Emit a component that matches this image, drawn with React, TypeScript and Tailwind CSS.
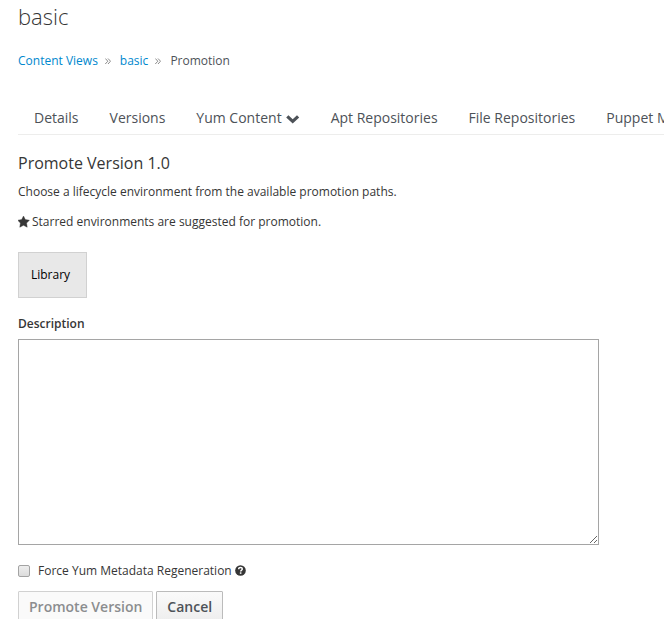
import { useState } from 'react';

const tabs = [
  { label: 'Details' },
  { label: 'Versions' },
  { label: 'Yum Content', menu: true },
  { label: 'Apt Repositories' },
  { label: 'File Repositories' },
  { label: 'Puppet Modules' },
];

function ChevronDown() {
  return (
    <svg viewBox="0 0 14 10" className="mt-px h-[10px] w-[14px]" aria-hidden="true">
      <path d="M0.2 3.4 L2.4 1.2 L6.7 5.2 L11 1.2 L13.2 3.4 L6.7 9.6 Z" fill="currentColor" />
    </svg>
  );
}

function Star() {
  return (
    <svg viewBox="0 0 12 12" className="h-3 w-3" aria-hidden="true">
      <path
        d="M5.5 0 L7.3 3.6 L11.4 4.2 L8.6 7.1 L9.2 11.2 L5.5 9.3 L1.8 11.2 L2.4 7.1 L-0.4 4.2 L3.7 3.6 Z"
        fill="currentColor"
        stroke="currentColor"
        strokeWidth="0.4"
      />
    </svg>
  );
}

function Help() {
  return (
    <svg viewBox="0 0 12 12" className="mb-px h-[11px] w-[11px]" aria-hidden="true">
      <circle cx="6" cy="6" r="5.8" fill="currentColor" />
      <path
        d="M4 4.6 C4 3.3 4.9 2.8 6 2.8 C7.2 2.8 8 3.5 8 4.4 C8 5.6 6.2 5.6 6.2 7.1"
        fill="none"
        stroke="white"
        strokeWidth="1.6"
      />
      <rect x="5.3" y="8" width="1.7" height="1.6" fill="white" />
    </svg>
  );
}

function Separator() {
  return (
    <svg viewBox="0 0 6 8" className="mr-[9px] ml-[7px] h-2 w-1.5 text-[#8b8b8b]" aria-hidden="true">
      <path d="M0.3 1.5 L2.8 4.2 L0.3 7 M3 1.5 L5.5 4.2 L3 7" fill="none" stroke="currentColor" strokeWidth="1" />
    </svg>
  );
}

export default function App() {
  const [force, setForce] = useState(false);
  const [description, setDescription] = useState('');

  return (
    <div className="h-screen overflow-hidden bg-white pl-[18px] font-['Open_Sans',sans-serif] text-xs text-[#363636]">
      <h1 className="pt-1 text-[22px] leading-6 font-light">basic</h1>

      <nav aria-label="Breadcrumb" className="mt-[25px] flex items-center leading-4">
        <a href="#views" className="text-[#0088ce]">Content Views</a>
        <Separator />
        <a href="#basic" className="text-[#0088ce]">basic</a>
        <Separator />
        <span className="text-[#4d5258]">Promotion</span>
      </nav>

      <nav aria-label="Content view" className="mt-[31px] border-b border-[#ededec]">
        <ul className="flex">
          {tabs.map((tab) => (
            <li key={tab.label} className="-mr-px shrink-0">
              <a
                href="#tab"
                className="flex items-center gap-1 px-4 pt-2 pb-1.5 text-sm leading-5 whitespace-nowrap text-[#4d5258]"
              >
                {tab.label}
                {tab.menu && <ChevronDown />}
              </a>
            </li>
          ))}
        </ul>
      </nav>

      <main>
        <h2 className="mt-4 text-base leading-6">Promote Version 1.0</h2>
        <p className="mt-[7px] leading-5">Choose a lifecycle environment from the available promotion paths.</p>
        <p className="mt-2.5 flex items-center gap-0.5 leading-5">
          <Star />
          Starred environments are suggested for promotion.
        </p>

        <button type="button" className="mt-5 block h-[46px] w-[69px] border border-[#d1d1d1] bg-[#e8e8e8] pr-1 text-black">
          Library
        </button>

        <label htmlFor="description" className="mt-4 block leading-5 font-semibold">
          Description
        </label>
        <textarea
          id="description"
          value={description}
          onChange={(event) => setDescription(event.target.value)}
          className="mt-[5px] block h-[206px] w-[90%] border border-[#a5a5a5] bg-white p-1 outline-none"
        />

        <div className="mt-4 flex items-center leading-5">
          <input
            id="force"
            type="checkbox"
            checked={force}
            onChange={(event) => setForce(event.target.checked)}
            className="mr-2 h-3 w-3 appearance-none rounded-xs border border-[#a3a3a3] bg-linear-to-b from-[#eeeeee] to-[#dcdcdc] checked:bg-[#0088ce]"
          />
          <label htmlFor="force" className="mr-[3px]">Force Yum Metadata Regeneration</label>
          <Help />
        </div>

        <div className="mt-2.5 flex gap-[3px] text-sm font-semibold">
          <button type="button" disabled className="h-8 rounded-[1px] border border-[#d1d1d1] bg-[#fafafa] px-2.5 text-[#8b8d8f]">
            Promote Version
          </button>
          <button type="button" className="h-8 rounded-[1px] border border-[#bbbbbb] bg-linear-to-b from-[#fafafa] to-[#ededed] px-2.5 text-[#4d5258]">
            Cancel
          </button>
        </div>
      </main>
    </div>
  );
}
